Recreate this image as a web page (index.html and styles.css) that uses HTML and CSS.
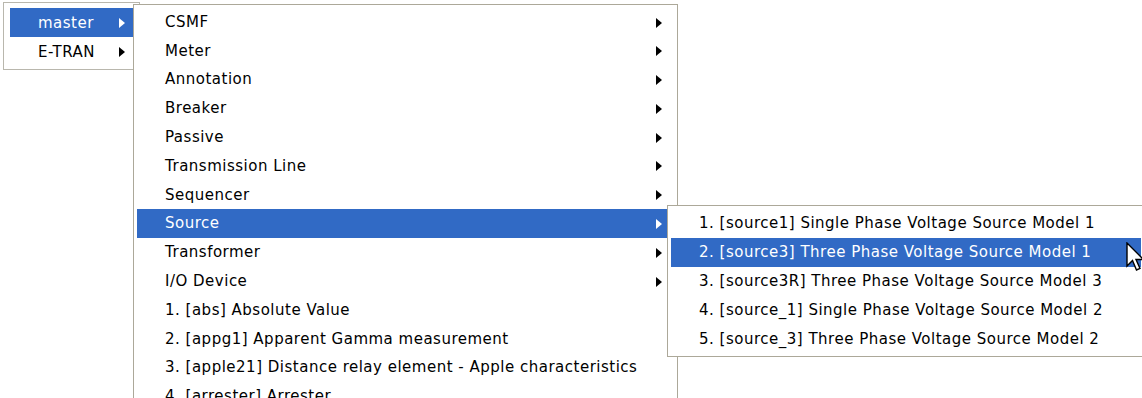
FILE: index.html
```html
<!DOCTYPE html>
<html lang="en">

<head>
    <meta charset="UTF-8">
    <title>Component menu</title>
    <link rel="stylesheet" href="styles.css">
</head>

<body>
    <div class="desk">
        <ul class="menu menu-root">
            <li class="item active">master<span class="arrow"></span></li>
            <li class="item">E-TRAN<span class="arrow"></span></li>
        </ul>

        <ul class="menu menu-lib">
            <li class="item">CSMF<span class="arrow"></span></li>
            <li class="item">Meter<span class="arrow"></span></li>
            <li class="item">Annotation<span class="arrow"></span></li>
            <li class="item">Breaker<span class="arrow"></span></li>
            <li class="item">Passive<span class="arrow"></span></li>
            <li class="item">Transmission Line<span class="arrow"></span></li>
            <li class="item">Sequencer<span class="arrow"></span></li>
            <li class="item active">Source<span class="arrow"></span></li>
            <li class="item">Transformer<span class="arrow"></span></li>
            <li class="item">I/O Device<span class="arrow"></span></li>
            <li class="item">1. [abs] Absolute Value</li>
            <li class="item">2. [appg1] Apparent Gamma measurement</li>
            <li class="item">3. [apple21] Distance relay element - Apple characteristics</li>
            <li class="item">4. [arrester] Arrester</li>
        </ul>

        <ul class="menu menu-sub">
            <li class="item">1. [source1] Single Phase Voltage Source Model 1</li>
            <li class="item active">2. [source3] Three Phase Voltage Source Model 1</li>
            <li class="item">3. [source3R] Three Phase Voltage Source Model 3</li>
            <li class="item">4. [source_1] Single Phase Voltage Source Model 2</li>
            <li class="item">5. [source_3] Three Phase Voltage Source Model 2</li>
        </ul>

        <svg class="cursor" width="20" height="32" viewBox="0 0 20 32">
            <path d="M1 1 L1 24 L6.5 18.5 L10.5 28 L14 26.5 L10 17.5 L17.5 17.5 Z" fill="#fff" stroke="#000" stroke-width="1.4" stroke-linejoin="miter"/>
        </svg>
    </div>
</body>

</html>
```

FILE: styles.css
```css
body {
    margin: 0;
    background-color: #fff;
    font-family: 'DejaVu Sans', sans-serif;
    font-size: 15px;
    letter-spacing: 0.5px;
    color: #000;
    overflow: hidden;
}
.desk {
    position: relative;
    width: 1142px;
    height: 398px;
    overflow: hidden;
}
.menu {
    position: absolute;
    margin: 0;
    list-style: none;
    background-color: #fff;
    border: 1px solid #aca899;
    padding: 3px 3px;
}
.item {
    position: relative;
    display: flex;
    align-items: center;
    height: 28.8px;
    padding-left: 28px;
    white-space: nowrap;
}
.item.active {
    background-color: #316ac5;
    color: #fff;
}
.arrow {
    position: absolute;
    right: 12px;
    top: 10px;
    width: 0;
    height: 0;
    border-top: 5px solid transparent;
    border-bottom: 5px solid transparent;
    border-left: 6px solid #000;
}
.active .arrow {
    border-left-color: #fff;
}

/* first level */
.menu-root {
    left: 3px;
    top: 2px;
    width: 123px;
    padding: 5px 6px 3px 6px;
    border-color: #b9b7ad;
}
.menu-root .item {
    height: 29px;
}
.menu-root .arrow {
    right: 8px;
}

/* library menu */
.menu-lib {
    left: 133px;
    top: 4px;
    width: 537px;
    padding: 2.5px 3px;
}

/* source submenu */
.menu-sub {
    left: 667px;
    top: 205px;
    width: 470px;
    padding: 3px 3px;
}

.cursor {
    position: absolute;
    left: 1126px;
    top: 242px;
}
```
